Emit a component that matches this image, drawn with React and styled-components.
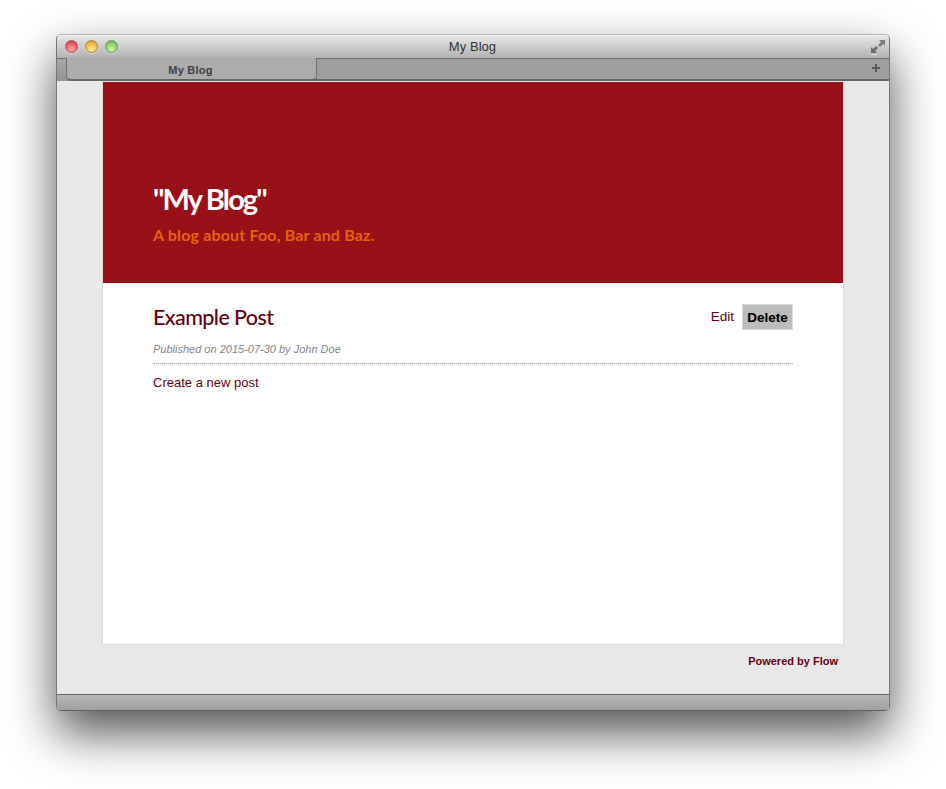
import React from 'react'
import styled, { createGlobalStyle } from 'styled-components'

const GlobalStyle = createGlobalStyle`
  html, body {
    margin: 0;
    padding: 0;
    background: #fff;
  }
  body {
    width: 946px;
    height: 789px;
    overflow: hidden;
    font-family: "Liberation Sans", Arial, sans-serif;
  }
`

const Page = styled.div`
  padding: 34px 0 0 56px;
`

const Window = styled.div`
  width: 834px;
  height: 677px;
  box-sizing: border-box;
  display: flex;
  flex-direction: column;
  border-radius: 5px;
  border: 1px solid #777;
  border-top-color: #b5b5b5;
  border-bottom-color: #606060;
  overflow: hidden;
  background: #e8e8e8;
  box-shadow: 0 22px 48px rgba(0, 0, 0, 0.68);
`

const TitleBar = styled.div`
  height: 23px;
  flex: none;
  position: relative;
  display: flex;
  align-items: center;
  justify-content: center;
  box-sizing: border-box;
  background: linear-gradient(#e6e6e6, #b2b2b2);
  border-top: 1px solid #f2f2f2;
`

const Lights = styled.div`
  position: absolute;
  left: 7.5px;
  top: 3.5px;
  display: flex;
  gap: 7px;
`

const Light = styled.span`
  width: 13px;
  height: 13px;
  border-radius: 50%;
  box-sizing: border-box;
  border: 1px solid ${p => p.$edge};
  background: radial-gradient(circle at 50% 78%, ${p => p.$glow} 0, ${p => p.$base} 60%, ${p => p.$dark} 100%);
  box-shadow: 0 1px 0 rgba(255, 255, 255, 0.45);
`

const Title = styled.div`
  font-size: 13px;
  letter-spacing: 0.05px;
  color: #333;
  margin: -2px 1px 0 0;
`

const ExpandIcon = styled.svg`
  position: absolute;
  right: 3px;
  top: 3px;
`

const TabBar = styled.div`
  height: 23px;
  flex: none;
  position: relative;
  display: flex;
  box-sizing: border-box;
  background: #b0b0b0;
`

const TabStub = styled.div`
  width: 13px;
  flex: none;
  box-sizing: border-box;
  background: linear-gradient(#a6a6a6, #949494);
  border-top: 1px solid #707070;
  border-right: 1px solid #707070;
  border-radius: 0 5px 0 0;
`

const Tab = styled.div`
  width: 251px;
  flex: none;
  position: relative;
  box-sizing: border-box;
  margin-left: -4px;
  display: flex;
  align-items: center;
  justify-content: center;
  background: #acacac;
  border: 1px solid #707070;
  border-top: none;
  border-bottom: 2px solid #666;
  border-radius: 0 0 5px 5px;
  font-size: 11px;
  font-weight: 700;
  padding: 2px 2px 0 0;
  color: #3c4048;
  letter-spacing: 0.25px;
`

const TabRest = styled.div`
  flex: 1;
  margin-left: -5px;
  box-sizing: border-box;
  background: #9e9e9e;
  border-top: 1px solid #707070;
  border-left: 1px solid #707070;
  border-bottom: 2px solid #666;
  border-radius: 5px 0 0 0;
`

const PlusIcon = styled.svg`
  position: absolute;
  right: 9px;
  top: 6px;
`

const Content = styled.div`
  flex: 1;
  min-height: 0;
  box-sizing: border-box;
  padding: 1px 45px 0;
  background: #e8e8e8;
  display: flex;
  flex-direction: column;
`

const Sheet = styled.main`
  height: 563px;
  flex: none;
  box-sizing: border-box;
  background: #fff;
  border: 1px solid #dcdcdc;
  border-top: none;
`

const Header = styled.header`
  height: 201px;
  box-sizing: border-box;
  padding: 99px 50px 0;
  background: #981018;
`

const BlogName = styled.h1`
  margin: 0;
  font-family: Lato, "Noto Sans", sans-serif;
  font-size: 29px;
  line-height: 36px;
  font-weight: 700;
  letter-spacing: -1.85px;
  color: #fff;
`

const Tagline = styled.p`
  margin: 7px 0 0;
  font-family: Lato, "Noto Sans", sans-serif;
  font-size: 16px;
  line-height: 22px;
  font-weight: 700;
  letter-spacing: 0.17px;
  color: #e8620c;
`

const Post = styled.section`
  padding: 21px 50px 0;
`

const PostHead = styled.div`
  display: flex;
  justify-content: space-between;
  align-items: center;
  height: 26px;
`

const PostTitle = styled.h2`
  margin: 0;
  font-family: Lato, "Noto Sans", sans-serif;
  font-size: 21.5px;
  line-height: 26px;
  font-weight: 500;
  letter-spacing: -0.6px;
  color: #660010;
`

const Actions = styled.div`
  display: flex;
  align-items: center;
  gap: 8px;
`

const EditLink = styled.a`
  font-size: 13.5px;
  color: #660010;
  margin-top: -2px;
`

const DeleteButton = styled.button`
  width: 51px;
  height: 26px;
  padding: 1px 0 0;
  box-sizing: border-box;
  border: 1px solid #d8d8d8;
  background: #bcbcbc;
  font-family: "Liberation Sans", Arial, sans-serif;
  font-size: 13.5px;
  font-weight: 700;
  color: #000;
`

const Meta = styled.div`
  margin-top: 12px;
  padding-bottom: 7px;
  font-size: 11px;
  line-height: 14px;
  font-weight: 400;
  font-style: italic;
  color: #858585;
  border-bottom: 1px dotted #aaa;
`

const Body = styled.p`
  margin: 11px 0 0;
  font-size: 13px;
  line-height: 16px;
  color: #660010;
`

const Footer = styled.footer`
  margin-top: 9px;
  padding-right: 6px;
  text-align: right;
  font-size: 11px;
  line-height: 14px;
  font-weight: 700;
  color: #660010;
`

const StatusBar = styled.div`
  height: 16px;
  flex: none;
  box-sizing: border-box;
  border-top: 1px solid #666;
  background: linear-gradient(#b8b8b8, #a0a0a0);
`

export default function App() {
  return (
    <Page>
      <GlobalStyle />
      <Window>
        <TitleBar>
          <Lights>
            <Light $edge="#a85058" $glow="#ffb0b0" $base="#ee5a60" $dark="#b83038" />
            <Light $edge="#b08a40" $glow="#ffe8a0" $base="#f2b84a" $dark="#c08a28" />
            <Light $edge="#6a9a58" $glow="#d0f5b0" $base="#90cc70" $dark="#5c9a48" />
          </Lights>
          <Title>My Blog</Title>
          <ExpandIcon width="16" height="16" viewBox="0 0 16 16">
            <path d="M15 1H9L11 3L8 6L10 8L13 5L15 7Z" fill="#7c7c7c" />
            <path d="M1 14V8L3 10L6 7L8 9L5 12L7 14Z" fill="#6a6a6a" />
            <path d="M1 15.5H7" stroke="#e4e4e4" strokeWidth="1" />
          </ExpandIcon>
        </TitleBar>
        <TabBar>
          <TabStub />
          <Tab>My Blog</Tab>
          <TabRest />
          <PlusIcon width="8" height="8" viewBox="0 0 8 8">
            <path d="M3 0H5V3H8V5H5V8H3V5H0V3H3Z" fill="#5a5a5a" />
          </PlusIcon>
        </TabBar>
        <Content>
          <Sheet>
            <Header>
              <BlogName>"My Blog"</BlogName>
              <Tagline>A blog about Foo, Bar and Baz.</Tagline>
            </Header>
            <Post>
              <PostHead>
                <PostTitle>Example Post</PostTitle>
                <Actions>
                  <EditLink>Edit</EditLink>
                  <DeleteButton>Delete</DeleteButton>
                </Actions>
              </PostHead>
              <Meta>Published on 2015-07-30 by John Doe</Meta>
              <Body>Create a new post</Body>
            </Post>
          </Sheet>
          <Footer>Powered by Flow</Footer>
        </Content>
        <StatusBar />
      </Window>
    </Page>
  )
}
